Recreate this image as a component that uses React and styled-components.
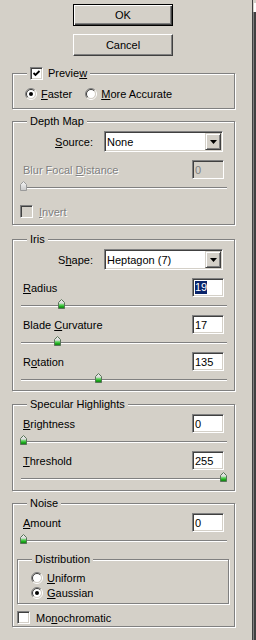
import React from "react";
import styled, { createGlobalStyle } from "styled-components";

const GlobalStyle = createGlobalStyle`
  html, body {
    margin: 0;
    padding: 0;
    background: #d4d0c8;
  }
  body {
    font-family: "Liberation Sans", Arial, sans-serif;
    font-size: 11px;
    color: #000;
  }
`;

function Radio({ checked }) {
  return (
    <RadioBox width="12" height="12" viewBox="0 0 12 12">
      <circle cx="6" cy="6" r="4.2" fill="#fff" />
      <path d="M2.1 9.9 A5.5 5.5 0 0 1 9.9 2.1" fill="none" stroke="#808080" />
      <path d="M9.9 2.1 A5.5 5.5 0 0 1 2.1 9.9" fill="none" stroke="#fff" />
      <path d="M2.8 9.2 A4.5 4.5 0 0 1 9.2 2.8" fill="none" stroke="#404040" />
      <path d="M9.2 2.8 A4.5 4.5 0 0 1 2.8 9.2" fill="none" stroke="#d4d0c8" />
      {checked && <circle cx="6" cy="6" r="2" fill="#000" />}
    </RadioBox>
  );
}

function Check({ checked, disabled }) {
  return (
    <CheckBox $disabled={disabled}>
      {checked && (
        <svg width="9" height="9" viewBox="0 0 9 9">
          <polyline points="1.5,4 3.5,6 7.5,2" fill="none" stroke="#000" strokeWidth="1.8" />
        </svg>
      )}
    </CheckBox>
  );
}

function Slider({ frac, disabled }) {
  return (
    <SliderBox>
      <Track />
      <ThumbWrap style={{ left: `${7 + 200 * frac}px` }}>
        <svg width="7" height="10" viewBox="0 0 7 10">
          <defs>
            <linearGradient id={disabled ? "tg-off" : "tg-on"} x1="0" y1="0" x2="0" y2="1">
              {disabled ? (
                <>
                  <stop offset="0" stopColor="#f6f6f6" />
                  <stop offset="1" stopColor="#c8c8c8" />
                </>
              ) : (
                <>
                  <stop offset="0" stopColor="#f2f2f2" />
                  <stop offset="0.42" stopColor="#d8d8d8" />
                  <stop offset="0.5" stopColor="#8be08b" />
                  <stop offset="0.75" stopColor="#22b422" />
                  <stop offset="1" stopColor="#0d760d" />
                </>
              )}
            </linearGradient>
          </defs>
          <polygon
            points="3.5,0.5 6.5,3.5 6.5,9.5 0.5,9.5 0.5,3.5"
            fill={`url(#${disabled ? "tg-off" : "tg-on"})`}
            stroke={disabled ? "#9a9a9a" : "#587458"}
          />
        </svg>
      </ThumbWrap>
    </SliderBox>
  );
}

function Param({ label, value, frac, selected, disabled }) {
  return (
    <ParamRow>
      <LabelLine>
        <Label $disabled={disabled}>{label}</Label>
        <NumberField $disabled={disabled}>
          {selected ? <Selected>{value}</Selected> : value}
        </NumberField>
      </LabelLine>
      <Slider frac={frac} disabled={disabled} />
    </ParamRow>
  );
}

function Dropdown({ label, value }) {
  return (
    <FieldRow>
      <FieldLabel>{label}</FieldLabel>
      <SelectBox>
        <SelectText>{value}</SelectText>
        <ArrowButton>
          <svg width="7" height="4" viewBox="0 0 7 4">
            <polygon points="0,0 7,0 3.5,4" fill="#000" />
          </svg>
        </ArrowButton>
      </SelectBox>
    </FieldRow>
  );
}

export default function App() {
  return (
    <Window>
      <GlobalStyle />
      <Panel>
        <ButtonStack>
          <Button $default>OK</Button>
          <Button>Cancel</Button>
        </ButtonStack>

        <Group $top={17} $pad="13px 0 8px 12px">
          <Legend>
            <Check checked />
            <span>
              Previe<Key>w</Key>
            </span>
          </Legend>
          <OptionRow>
            <Option>
              <Radio checked />
              <span>
                <Key>F</Key>aster
              </span>
            </Option>
            <Option>
              <Radio />
              <span>
                <Key>M</Key>ore Accurate
              </span>
            </Option>
          </OptionRow>
        </Group>

        <Group $top={12} $pad="9px 0 6px 0">
          <Legend>Depth Map</Legend>
          <Dropdown label={<><Key>S</Key>ource:</>} value="None" />
          <Gap $h={8} />
          <Param
            label={<>Blur Focal <Key>D</Key>istance</>}
            value="0"
            frac={0}
            disabled
          />
          <Gap $h={8} />
          <CheckRow $indent={7} $disabled>
            <Check disabled />
            <span>
              <Key>I</Key>nvert
            </span>
          </CheckRow>
        </Group>

        <Group $top={14} $pad="9px 0 1px 0">
          <Legend>Iris</Legend>
          <Dropdown label={<>S<Key>h</Key>ape:</>} value="Heptagon (7)" />
          <Gap $h={8} />
          <Param label={<><Key>R</Key>adius</>} value="19" frac={0.19} selected />
          <Param label={<>Blade <Key>C</Key>urvature</>} value="17" frac={0.17} />
          <Param label={<>R<Key>o</Key>tation</>} value="135" frac={135 / 360} />
        </Group>

        <Group $top={13} $pad="9px 0 2px 0">
          <Legend>Specular Highlights</Legend>
          <Param label={<><Key>B</Key>rightness</>} value="0" frac={0} />
          <Param label={<><Key>T</Key>hreshold</>} value="255" frac={1} />
        </Group>

        <Group $top={12} $pad="9px 0 2px 0">
          <Legend>Noise</Legend>
          <Param label={<><Key>A</Key>mount</>} value="0" frac={0} />
          <InnerGroup>
            <Legend>Distribution</Legend>
            <Option $row>
              <Radio />
              <span>
                <Key>U</Key>niform
              </span>
            </Option>
            <Option $row>
              <Radio checked />
              <span>
                <Key>G</Key>aussian
              </span>
            </Option>
          </InnerGroup>
          <CheckRow $indent={4}>
            <Check />
            <span>
              Mo<Key>n</Key>ochromatic
            </span>
          </CheckRow>
        </Group>
      </Panel>
      <Edge>
        <EdgeCap />
      </Edge>
    </Window>
  );
}

const Window = styled.div`
  display: flex;
  width: 256px;
  height: 640px;
  overflow: hidden;
  background: #d4d0c8;
`;

const Panel = styled.div`
  width: 252px;
  padding-top: 4px;
  display: flex;
  flex-direction: column;
`;

const Edge = styled.div`
  width: 4px;
  height: 640px;
  box-sizing: border-box;
  border-left: 1px solid #404040;
  background: linear-gradient(to right, #808080 0 1px, #404040 1px 100%);
`;

const EdgeCap = styled.div`
  height: 12px;
  background: linear-gradient(to right, #d4d0c8 0 1px, transparent 1px),
    linear-gradient(to bottom, #d4d0c8 0 3px, #fff 3px 100%);
`;

const ButtonStack = styled.div`
  display: flex;
  flex-direction: column;
  gap: 8px;
  margin-left: 73px;
  width: 100px;
`;

const Button = styled.button`
  box-sizing: border-box;
  width: 100px;
  height: 22px;
  padding: 0;
  font-family: inherit;
  font-size: 11px;
  color: #000;
  background: #d4d0c8;
  border: 1px solid;
  border-color: ${(p) => (p.$default ? "#000" : "#fff #404040 #404040 #fff")};
  box-shadow: ${(p) =>
    p.$default
      ? "inset 1px 1px #fff, inset -1px -1px #404040, inset -2px -2px #808080"
      : "inset -1px -1px #808080"};
`;

const Group = styled.div`
  position: relative;
  box-sizing: border-box;
  width: 223px;
  margin: ${(p) => p.$top}px 0 0 12px;
  padding: ${(p) => p.$pad};
  border: 1px solid #808080;
  box-shadow: inset 1px 1px #fff, 1px 1px #fff;
  display: flex;
  flex-direction: column;
`;

const InnerGroup = styled.div`
  position: relative;
  box-sizing: border-box;
  width: 212px;
  margin: 9px 0 0 4px;
  padding: 10px 0 3px 13px;
  border: 1px solid #808080;
  box-shadow: inset 1px 1px #fff, 1px 1px #fff;
  display: flex;
  flex-direction: column;
`;

const Legend = styled.div`
  position: absolute;
  top: -7px;
  left: 14px;
  height: 13px;
  padding: 0 3px;
  display: flex;
  align-items: center;
  gap: 5px;
  line-height: 13px;
  background: #d4d0c8;
  white-space: nowrap;
`;

const Key = styled.span`
  text-decoration: underline;
`;

const Gap = styled.div`
  height: ${(p) => p.$h}px;
  flex: none;
`;

const OptionRow = styled.div`
  display: flex;
  align-items: center;
  gap: 13px;
  height: 13px;
`;

const Option = styled.div`
  display: flex;
  align-items: center;
  gap: 4px;
  height: ${(p) => (p.$row ? "15px" : "13px")};
  white-space: nowrap;
`;

const RadioBox = styled.svg`
  flex: none;
  display: block;
`;

const CheckBox = styled.div`
  flex: none;
  box-sizing: border-box;
  width: 13px;
  height: 13px;
  display: flex;
  align-items: center;
  justify-content: center;
  background: ${(p) => (p.$disabled ? "#d4d0c8" : "#fff")};
  border: 1px solid;
  border-color: #808080 #fff #fff #808080;
  box-shadow: inset 1px 1px #404040, inset -1px -1px #d4d0c8;
`;

const CheckRow = styled.div`
  display: flex;
  align-items: center;
  gap: 6px;
  height: 13px;
  margin-top: ${(p) => (p.$indent === 4 ? 7 : 0)}px;
  padding-left: ${(p) => p.$indent}px;
  color: ${(p) => (p.$disabled ? "#808080" : "#000")};
  text-shadow: ${(p) => (p.$disabled ? "1px 1px 0 #fff" : "none")};
`;

const FieldRow = styled.div`
  display: flex;
  align-items: center;
  gap: 11px;
  height: 21px;
`;

const FieldLabel = styled.div`
  width: 80px;
  text-align: right;
  white-space: nowrap;
`;

const SelectBox = styled.div`
  box-sizing: border-box;
  width: 119px;
  height: 21px;
  display: flex;
  align-items: center;
  padding: 1px;
  background: #fff;
  border: 1px solid;
  border-color: #808080 #fff #fff #808080;
  box-shadow: inset 1px 1px #404040, inset -1px -1px #d4d0c8;
`;

const SelectText = styled.div`
  flex: 1;
  padding-left: 1px;
  white-space: nowrap;
`;

const ArrowButton = styled.div`
  box-sizing: border-box;
  width: 16px;
  height: 17px;
  display: flex;
  align-items: center;
  justify-content: center;
  background: #d4d0c8;
  border: 1px solid;
  border-color: #d4d0c8 #404040 #404040 #d4d0c8;
  box-shadow: inset 1px 1px #fff, inset -1px -1px #808080;
`;

const ParamRow = styled.div`
  display: flex;
  flex-direction: column;
  height: 37px;
`;

const LabelLine = styled.div`
  display: flex;
  align-items: center;
  justify-content: space-between;
  height: 19px;
  padding: 0 10px;
`;

const Label = styled.div`
  white-space: nowrap;
  color: ${(p) => (p.$disabled ? "#808080" : "#000")};
  text-shadow: ${(p) => (p.$disabled ? "1px 1px 0 #fff" : "none")};
`;

const NumberField = styled.div`
  box-sizing: border-box;
  width: 32px;
  height: 19px;
  display: flex;
  align-items: center;
  padding-left: 2px;
  color: ${(p) => (p.$disabled ? "#808080" : "#000")};
  background: ${(p) => (p.$disabled ? "#d4d0c8" : "#fff")};
  border: 1px solid;
  border-color: #808080 #fff #fff #808080;
  box-shadow: inset 1px 1px #404040, inset -1px -1px #d4d0c8;
`;

const Selected = styled.span`
  background: #0a246a;
  color: #fff;
  line-height: 13px;
`;

const SliderBox = styled.div`
  position: relative;
  height: 18px;
`;

const Track = styled.div`
  margin: 8px 0 0 8px;
  width: 206px;
  height: 0;
  border-top: 1px solid #808080;
  border-bottom: 1px solid #fff;
`;

const ThumbWrap = styled.div`
  position: absolute;
  top: 2px;
  width: 7px;
  height: 10px;
  svg {
    display: block;
  }
`;
